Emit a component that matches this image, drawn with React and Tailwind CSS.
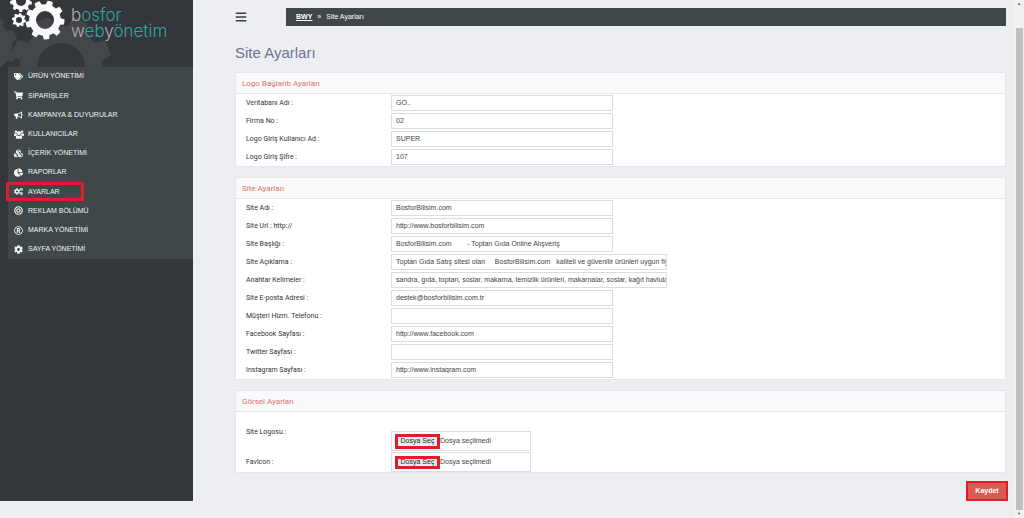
import { useState } from "react";
import {
  FaBars,
  FaBullseye,
  FaChartPie,
  FaCog,
  FaCogs,
  FaCubes,
  FaRegRegistered,
  FaShoppingCart,
  FaTags,
} from "react-icons/fa";

const Bullhorn = () => (
  <svg viewBox="0 0 18 16" className="h-2 w-[9px]" fill="currentColor">
    <path
      fillRule="evenodd"
      d="M16 6a2 2 0 0 1 0 3.6V14c0 .6-.5 1-1 1-2.5-2.3-5-3.6-7.5-4-.8.3-1.2 1-.8 1.7-.4.7.2 1.3 1 1.9-.7 1-2.8 1-3.8.2-.4-1.3-1-2.5-.5-4.1H2a1.5 1.5 0 0 1-1.5-1.5V6.5A1.5 1.5 0 0 1 2 5h4.5C9.4 5 12.200 3.5 15 1c.5 0 1 .4 1 1zM14.200 3.5C12.200 5.1 10 6 8 6.300v3.200c2 .3 4.200 1.200 6.200 2.800z"
    />
  </svg>
);

const Group = () => (
  <svg viewBox="0 0 20 18" className="h-[9px] w-2.5 shrink-0" fill="currentColor">
    <circle cx="4" cy="3.5" r="2.6" />
    <circle cx="16" cy="3.5" r="2.6" />
    <circle cx="10" cy="6" r="3.9" />
    <path d="M0 10.5C0 8 .6 6.600 1.600 6.600c1.400.9 2.800.9 4 .5.1 1.300.5 2.300 1.200 3.100-1.400 0-2.500.5-3.200 1.600H2c-1.200 0-2-.4-2-1.300zM20 10.500c0-2.500-.6-3.900-1.600-3.900-1.400.9-2.800.9-4 .5-.1 1.300-.5 2.300-1.200 3.100 1.400 0 2.500.5 3.200 1.600H18c1.200 0 2-.4 2-1.300z" />
    <path d="M3.500 15.200c0-3 .9-4.900 2.900-4.900 2.200 1.600 5 1.600 7.200 0 2 0 2.900 1.900 2.900 4.900 0 1.500-1 2.500-2.500 2.500H6c-1.500 0-2.500-1-2.500-2.500z" />
  </svg>
);

const menu = [
  { text: "ÜRÜN YÖNETİMİ", Icon: FaTags },
  { text: "SİPARİŞLER", Icon: FaShoppingCart },
  { text: "KAMPANYA & DUYURULAR", Icon: Bullhorn },
  { text: "KULLANICILAR", Icon: Group },
  { text: "İÇERİK YÖNETİMİ", Icon: FaCubes },
  { text: "RAPORLAR", Icon: FaChartPie },
  { text: "AYARLAR", Icon: FaCogs, active: true },
  { text: "REKLAM BÖLÜMÜ", Icon: FaBullseye },
  { text: "MARKA YÖNETİMİ", Icon: FaRegRegistered },
  { text: "SAYFA YÖNETİMİ", Icon: FaCog },
];

const logoFields = [
  { id: "db", label: "Veritabanı Adı :", value: "GO.." },
  { id: "firm", label: "Firma No :", value: "02" },
  { id: "user", label: "Logo Giriş Kullanıcı Ad :", value: "SUPER" },
  { id: "pass", label: "Logo Giriş Şifre :", value: "107" },
];

const siteFields = [
  { id: "name", label: "Site Adı :", value: "BosforBilisim.com" },
  { id: "url", label: "Site Url : http://", value: "http://www.bosforbilisim.com" },
  {
    id: "title",
    label: "Site Başlığı :",
    value: "BosforBilisim.com        - Toptan Gıda Online Alışveriş",
    area: true,
  },
  {
    id: "desc",
    label: "Site Açıklama :",
    value:
      "Toptan Gıda Satış sitesi olan     BosforBilisim.com   kaliteli ve güvenilir ürünleri uygun fiyatlarla",
    area: true,
    wide: true,
  },
  {
    id: "keys",
    label: "Anahtar Kelimeler :",
    value:
      "sandra, gıda, toptan, soslar, makarna, temizlik ürünleri, makarnalar, soslar, kağıt havlular",
    area: true,
    wide: true,
  },
  { id: "mail", label: "Site E-posta Adresi :", value: "destek@bosforbilisim.com.tr" },
  { id: "phone", label: "Müşteri Hizm. Telefonu :", value: "" },
  { id: "fb", label: "Facebook Sayfası :", value: "http://www.facebook.com" },
  { id: "tw", label: "Twitter Sayfası :", value: "" },
  { id: "ig", label: "Instagram Sayfası :", value: "http://www.instagram.com" },
];

// outline of a toothed wheel with a round hole
const gearPath = (cx, cy, r, hole, teeth, turn) => {
  const step = (Math.PI * 2) / teeth;
  const inner = r * 0.81;
  const at = (radius, a) =>
    `${(cx + radius * Math.cos(a)).toFixed(2)} ${(cy + radius * Math.sin(a)).toFixed(2)}`;
  let d = "";
  for (let i = 0; i < teeth; i++) {
    const a = i * step + turn;
    d += `${i ? "L" : "M"}${at(inner, a - step * 0.3)}L${at(r, a - step * 0.2)}`;
    d += `A${r} ${r} 0 0 1 ${at(r, a + step * 0.2)}L${at(inner, a + step * 0.3)}`;
    d += `A${inner} ${inner} 0 0 1 ${at(inner, a + step * 0.7)}`;
  }
  return `${d}ZM${cx - hole} ${cy}a${hole} ${hole} 0 1 0 ${hole * 2} 0a${hole} ${hole} 0 1 0 ${-hole * 2} 0Z`;
};

const Logo = () => (
  <svg viewBox="0 0 193 67" className="block h-[67px] w-[193px]" fillRule="evenodd">
    <path d={gearPath(61, 67, 51, 24, 8, -0.39)} fill="#43464b" />
    <path d={gearPath(-12, 46, 30, 11, 8, -0.39)} fill="#43464b" />
    <path d={gearPath(45, 20, 19.5, 9, 9, -1.3)} fill="#fafafa" />
    <path d={gearPath(21, 1, 11, 5, 9, 0.2)} fill="#fafafa" />
    <path d={gearPath(19, 20, 7, 3, 8, 0.2)} fill="#fafafa" />
    <g fontFamily="Inter, sans-serif" fontSize="17" fontWeight="300" fill="#2fa79c">
      <text x="71" y="21">
        <tspan fill="#b9a9ae">b</tspan>osfor
      </text>
      <text x="71" y="37">
        <tspan fill="#b9a9ae">w</tspan>eb<tspan fill="#b9a9ae">y</tspan>önetim
      </text>
    </g>
  </svg>
);

const Panel = ({ title, children }) => (
  <section className="border border-[#e6e7ea] bg-white">
    <h2 className="h-[21px] border-b border-[#e6e7ea] bg-[#fafafa] px-1.5 font-[Roboto,sans-serif] text-[8px] leading-[22px] text-[#e0706c]">
      {title}
    </h2>
    {children}
  </section>
);

const Field = ({ id, label, value, area, wide }) => {
  const [text, setText] = useState(value);
  return (
    <div className="flex h-[18px] items-center pl-2.5">
      <label
        htmlFor={id}
        className="w-[145px] shrink-0 font-[Roboto,sans-serif] text-[7px] leading-[18px] text-[#333]"
      >
        {label}
      </label>
      {area ? (
        <textarea
          id={id}
          rows={1}
          value={text}
          onChange={(e) => setText(e.target.value)}
          className={`h-4 resize-none overflow-hidden border border-[#dcdcdc] bg-white pl-1 text-[7px] leading-[14px] whitespace-pre text-[#444] outline-none ${
            wide ? "w-[276px]" : "w-[222px]"
          }`}
        />
      ) : (
        <input
          id={id}
          type="text"
          value={text}
          onChange={(e) => setText(e.target.value)}
          className="h-4 w-[222px] border border-[#dcdcdc] bg-white px-1 pb-0.5 text-[7px] leading-3 text-[#444] outline-none"
        />
      )}
    </div>
  );
};

const FileField = ({ id, label, tall }) => (
  <div className="flex h-5 pl-2.5">
    <label
      htmlFor={id}
      className={`w-[145px] shrink-0 font-[Roboto,sans-serif] text-[7px] text-[#333] ${
        tall ? "leading-[3px]" : "leading-5"
      }`}
    >
      {label}
    </label>
    <label className="flex w-[140px] cursor-pointer items-center border border-[#dcdcdc] pl-[3px] text-[7px] text-[#444]">
      <input id={id} type="file" className="sr-only" />
      <span
        className={`flex w-[45px] items-center justify-center border-[3px] border-[#e01e2b] bg-[#ececec] text-[#222] ${
          tall ? "h-[15px]" : "h-[13px]"
        }`}
      >
        Dosya Seç
      </span>
      <span>Dosya seçilmedi</span>
    </label>
  </div>
);

const App = () => {
  return (
    <div className="flex min-h-screen bg-[#edeef2] font-['Liberation_Sans',Arial,sans-serif]">
      <aside className="mb-[17px] w-[193px] shrink-0 bg-[#33363b]">
        <Logo />
        <nav className="ml-2 grid h-48 auto-rows-fr bg-[#3f4749]">
          {menu.map(({ text, Icon, active }) => (
            <a
              key={text}
              href="#"
              className="relative flex items-center gap-[5px] pl-1.5 text-[7px] text-[#f4f4f4]"
            >
              <span className="flex w-[9px] justify-center text-[9px]">
                <Icon />
              </span>
              {text}
              {active && (
                <span className="absolute inset-y-0 -left-0.5 w-[78px] border-[3px] border-[#e01e2b]" />
              )}
            </a>
          ))}
        </nav>
      </aside>

      <main className="min-w-0 flex-1 pt-2 pr-1.5 pl-[42px]">
        <header className="mr-0.5 flex items-center">
          <button type="button" aria-label="Menü" className="w-[51px] text-[12px] text-[#3a3f42]">
            <FaBars />
          </button>
          <div className="flex h-[18px] flex-1 items-center bg-[#3f4749] pl-2.5 text-[7px] text-white">
            <a href="#" className="font-bold underline">
              BWY
            </a>
            <span className="px-[5px]">»</span>
            <span>Site Ayarları</span>
          </div>
        </header>

        <h1 className="mt-[17px] mb-[9px] text-[15px] leading-5 text-[#6f7390]">Site Ayarları</h1>

        <div className="mr-0.5 flex flex-col gap-2.5">
          <Panel title="Logo Bağlantı Ayarları">
            {logoFields.map((f) => (
              <Field key={f.id} {...f} />
            ))}
          </Panel>
          <Panel title="Site Ayarları">
            {siteFields.map((f) => (
              <Field key={f.id} {...f} />
            ))}
          </Panel>
          <Panel title="Görsel Ayarları">
            <div className="flex flex-col gap-px pt-[19px]">
              <FileField id="logo" label="Site Logosu :" tall />
              <FileField id="favicon" label="Favicon :" />
            </div>
          </Panel>
        </div>

        <div className="mt-2 flex justify-end">
          <button
            type="button"
            className="h-5 w-[42px] border-2 border-[#e01e2b] bg-[#dc5a50] text-[7px] font-bold text-white"
          >
            Kaydet
          </button>
        </div>
      </main>

      <div className="flex w-2.5 flex-col items-center bg-[#f1f1f2] text-[4px] leading-[8px] text-[#555]">
        <span>▲</span>
        <div className="mt-5 w-[7px] flex-1 bg-[#c1c1c1]" />
        <span>▼</span>
      </div>
    </div>
  );
};

export default App;
